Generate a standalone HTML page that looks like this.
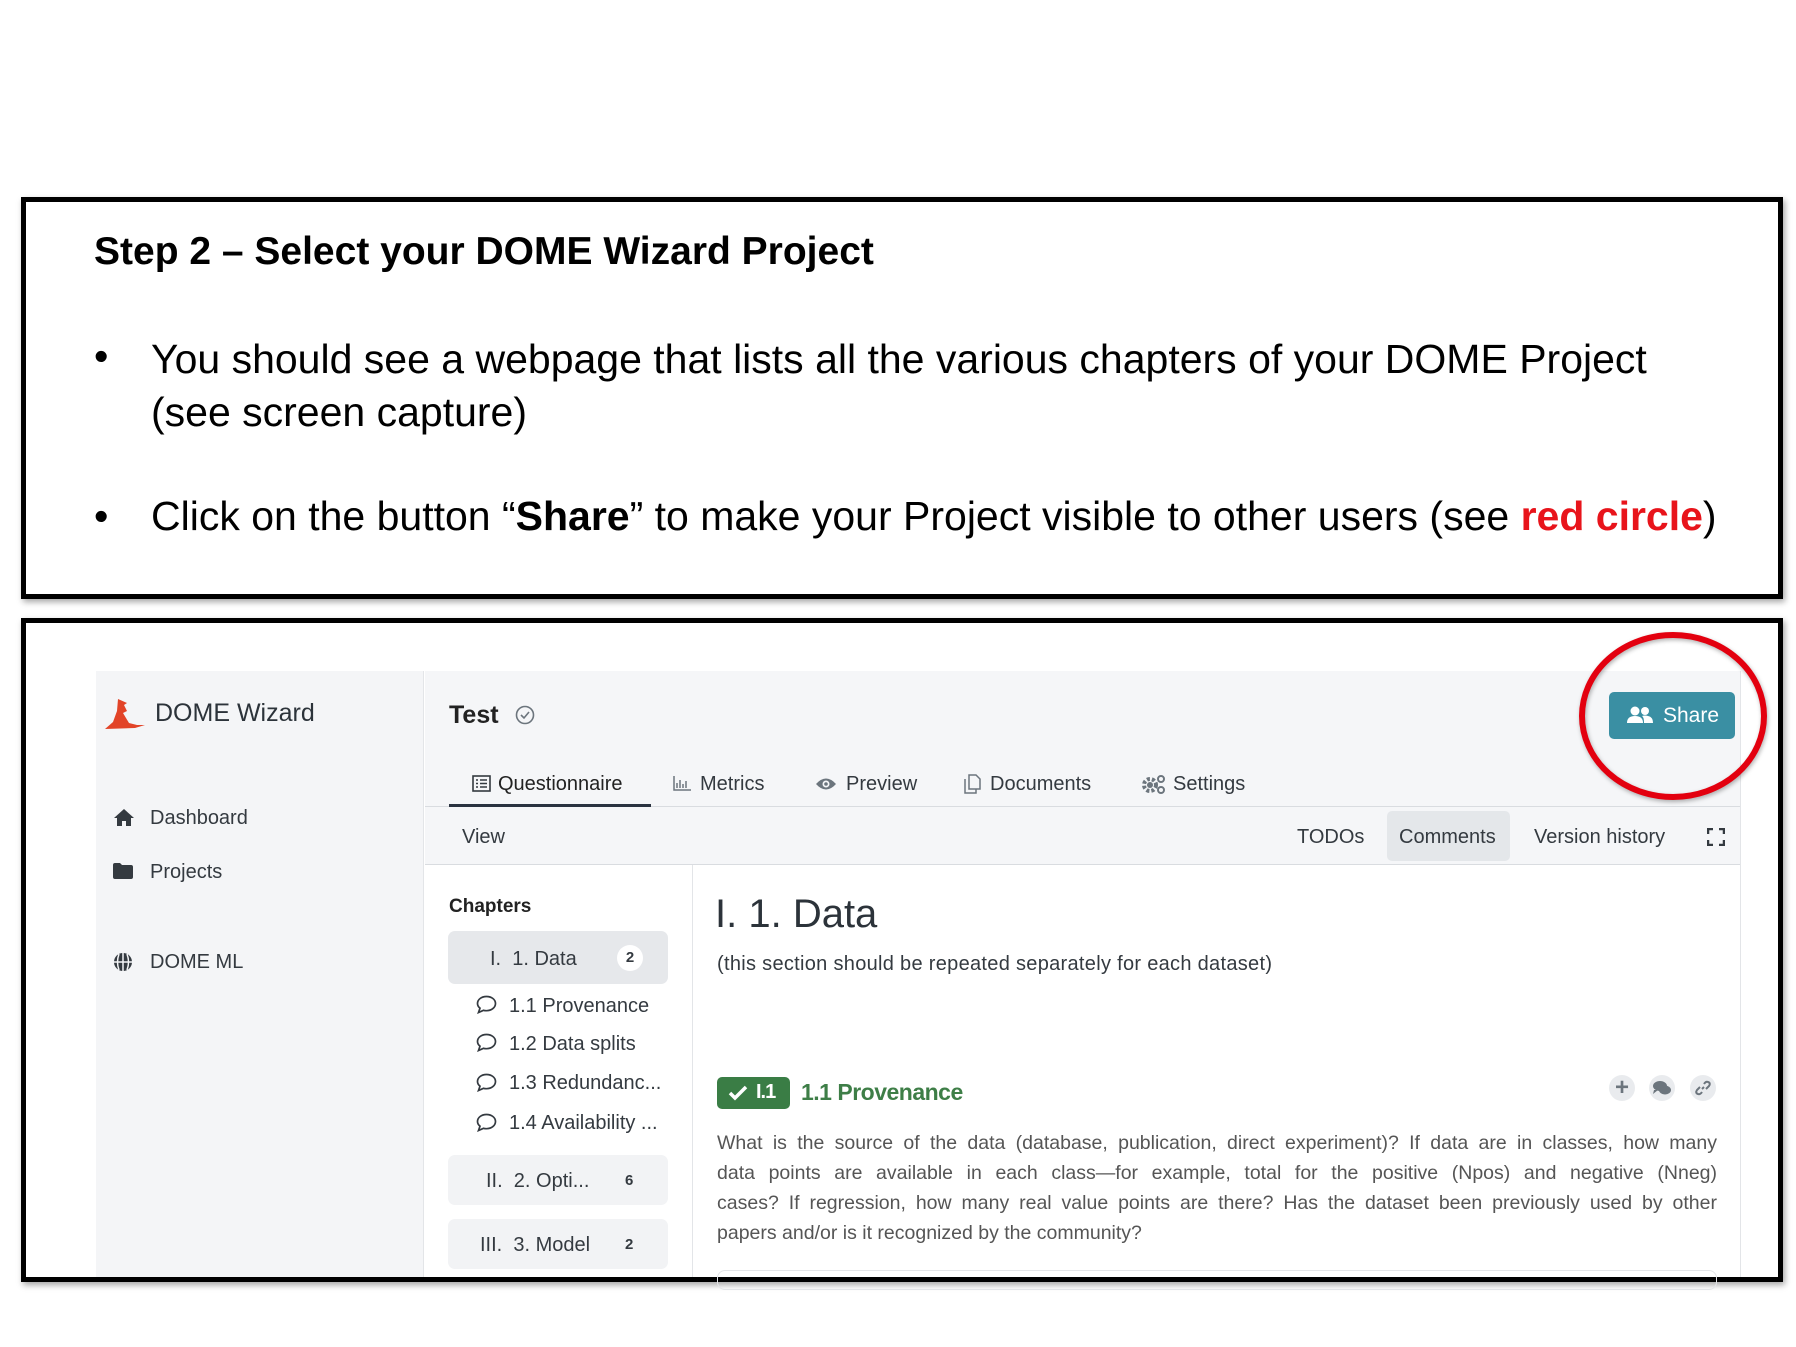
<!DOCTYPE html>
<html><head><meta charset="utf-8"><style>
*{margin:0;padding:0;box-sizing:border-box}
body{width:1796px;height:1347px;background:#fff;position:relative;overflow:hidden;font-family:"Liberation Sans",sans-serif;color:#343a40}
.abs{position:absolute;white-space:nowrap}
.box{position:absolute;border:5px solid #000;box-shadow:2px 3px 6px rgba(0,0,0,.35)}
.slide{font-family:"Liberation Sans",sans-serif;color:#000}
.ui{font-size:20px;color:#343a40}
.ico{position:absolute}
.pl{white-space:nowrap;text-align:justify;text-align-last:justify;height:30px}
</style></head><body>

<div class="box" style="left:21px;top:197px;width:1762px;height:402px"></div>
<div class="abs slide" style="left:94px;top:230px;font-size:39px;font-weight:bold">Step 2 – Select your DOME Wizard Project</div>
<div class="abs slide" style="left:94px;top:333px;font-size:41px">•</div>
<div class="abs slide" style="left:151px;top:333px;font-size:41px;line-height:53px">You should see a webpage that lists all the various chapters of your DOME Project<br>(see screen capture)</div>
<div class="abs slide" style="left:94px;top:493px;font-size:41px">•</div>
<div class="abs slide" style="left:151px;top:493px;font-size:41px">Click on the button “<b>Share</b>” to make your Project visible to other users (see <b style="color:#e8141b">red circle</b>)</div>

<div class="box" style="left:21px;top:618px;width:1762px;height:664px"></div>

<!-- app -->
<div style="position:absolute;left:96px;top:671px;width:1645px;height:606px;overflow:hidden">
 <div style="position:absolute;left:0;top:0;width:328px;height:606px;background:#f4f5f7;border-right:1px solid #e3e5e8"></div>
 <div style="position:absolute;left:329px;top:0;width:1316px;height:194px;background:#f5f6f8"></div>
 <div style="position:absolute;left:329px;top:135px;width:1316px;height:1px;background:#d9dce0"></div>
 <div style="position:absolute;left:329px;top:193px;width:1316px;height:1px;background:#d9dce0"></div>
 <div style="position:absolute;left:596px;top:194px;width:1px;height:420px;background:#e3e5e8"></div>
 <div style="position:absolute;left:1644px;top:0;width:1px;height:606px;background:#e3e5e8"></div>
</div>

<!-- logo -->
<svg class="ico" style="left:105px;top:697px" width="42" height="33" viewBox="0 0 42 33"><path d="M13 2 L22 6 L19 8 L22 14 L18 16 L24 26 L32 28 L40 28 L30 31 L0 32 L8 25 L12 14 Z" fill="#e24428"/></svg>
<div class="abs" style="left:155px;top:699px;font-size:25px;color:#2c333a">DOME Wizard</div>

<!-- nav -->
<svg class="ico" style="left:113px;top:808px" width="22" height="19" viewBox="0 0 22 19"><path d="M11 1 L1 10 L4 10 L4 18 L9 18 L9 13 L13 13 L13 18 L18 18 L18 10 L21 10 Z" fill="#343a40"/></svg>
<div class="abs ui" style="left:150px;top:807px">Dashboard</div>
<svg class="ico" style="left:113px;top:863px" width="20" height="16" viewBox="0 0 20 16"><path d="M0 2 Q0 0 2 0 L7 0 L9 2 L18 2 Q20 2 20 4 L20 14 Q20 16 18 16 L2 16 Q0 16 0 14Z" fill="#343a40"/></svg>
<div class="abs ui" style="left:150px;top:861px">Projects</div>
<svg class="ico" style="left:113px;top:952px" width="20" height="20" viewBox="0 0 20 20"><circle cx="10" cy="10" r="9" fill="#343a40"/><path d="M1 10 H19 M10 1 V19 M6 2 Q3 10 6 18 M14 2 Q17 10 14 18" stroke="#f4f5f7" stroke-width="1.5" fill="none"/></svg>
<div class="abs ui" style="left:150px;top:951px">DOME ML</div>

<!-- header -->
<div class="abs" style="left:449px;top:701px;font-size:25px;font-weight:bold;color:#222">Test</div>
<svg class="ico" style="left:515px;top:705px" width="20" height="20" viewBox="0 0 20 20"><circle cx="10" cy="10" r="8.5" fill="none" stroke="#6c757d" stroke-width="1.6"/><path d="M6 10 L9 13 L14 7" fill="none" stroke="#6c757d" stroke-width="1.6"/></svg>

<div style="position:absolute;left:1609px;top:692px;width:126px;height:47px;background:#3a8fa3;border-radius:5px"></div>
<svg class="ico" style="left:1627px;top:706px" width="26" height="18" viewBox="0 0 26 18"><circle cx="8" cy="5" r="4.5" fill="#fff"/><circle cx="18" cy="5" r="4" fill="#fff"/><path d="M0 17 Q0 10 8 10 Q16 10 16 17Z M17 17 Q17 11 15 10 Q18 9 21 10 Q26 11 26 17Z" fill="#fff"/></svg>
<div class="abs" style="left:1663px;top:704px;font-size:21px;color:#fff">Share</div>
<svg class="ico" style="left:1575px;top:628px;filter:drop-shadow(1px 2px 2px rgba(0,0,0,.3))" width="196" height="176" viewBox="0 0 196 176"><ellipse cx="98" cy="88" rx="91" ry="81" fill="none" stroke="#e3000f" stroke-width="6"/></svg>

<!-- tabs -->
<svg class="ico" style="left:472px;top:775px" width="19" height="17" viewBox="0 0 19 17"><rect x="1" y="1" width="17" height="15" fill="none" stroke="#343a40" stroke-width="1.6"/><path d="M4 5h2M8 5h7M4 8.5h2M8 8.5h7M4 12h2M8 12h7" stroke="#343a40" stroke-width="1.5"/></svg>
<div class="abs ui" style="left:498px;top:773px;color:#222">Questionnaire</div>
<div style="position:absolute;left:449px;top:804px;width:202px;height:3px;background:#2a3340"></div>
<svg class="ico" style="left:673px;top:776px" width="18" height="15" viewBox="0 0 18 15"><path d="M1 0V14H18M4 12V7M7 12V4M10 12V8M13 12V5" stroke="#6c757d" stroke-width="1.5" fill="none"/></svg>
<div class="abs ui" style="left:700px;top:773px">Metrics</div>
<svg class="ico" style="left:815px;top:777px" width="22" height="14" viewBox="0 0 22 14"><path d="M1 7 Q11 -4 21 7 Q11 18 1 7Z" fill="#6c757d"/><circle cx="11" cy="7" r="3.5" fill="#f5f6f8"/><circle cx="11" cy="7" r="1.8" fill="#6c757d"/></svg>
<div class="abs ui" style="left:846px;top:773px">Preview</div>
<svg class="ico" style="left:964px;top:774px" width="17" height="20" viewBox="0 0 17 20"><path d="M5 1H12L16 5V15H5Z M1 5V19H12V15" fill="none" stroke="#6c757d" stroke-width="1.5"/></svg>
<div class="abs ui" style="left:990px;top:773px">Documents</div>
<svg class="ico" style="left:1141px;top:774px" width="26" height="20" viewBox="0 0 26 20"><circle cx="9" cy="11" r="6" fill="none" stroke="#6c757d" stroke-width="4" stroke-dasharray="3 2"/><circle cx="9" cy="11" r="3" fill="#6c757d"/><circle cx="20" cy="5" r="3" fill="none" stroke="#6c757d" stroke-width="2"/><circle cx="20" cy="16" r="3" fill="none" stroke="#6c757d" stroke-width="2"/></svg>
<div class="abs ui" style="left:1173px;top:773px">Settings</div>

<!-- view bar -->
<div class="abs ui" style="left:462px;top:826px">View</div>
<div class="abs ui" style="left:1297px;top:826px">TODOs</div>
<div style="position:absolute;left:1387px;top:811px;width:123px;height:50px;background:#e4e7ea;border-radius:5px"></div>
<div class="abs ui" style="left:1399px;top:826px">Comments</div>
<div class="abs ui" style="left:1534px;top:826px">Version history</div>
<svg class="ico" style="left:1707px;top:828px" width="18" height="18" viewBox="0 0 18 18"><path d="M1 6V1H6M12 1H17V6M17 12V17H12M6 17H1V12" fill="none" stroke="#343a40" stroke-width="2.5"/></svg>

<!-- chapters -->
<div class="abs" style="left:449px;top:896px;font-size:19px;font-weight:bold;color:#222">Chapters</div>
<div style="position:absolute;left:448px;top:931px;width:220px;height:53px;background:#e6e8eb;border-radius:7px"></div>
<div class="abs ui" style="left:490px;top:948px">I.&nbsp; 1. Data</div>
<div style="position:absolute;left:617px;top:945px;width:26px;height:26px;border-radius:13px;background:#fff;font-size:15px;font-weight:bold;text-align:center;line-height:26px">2</div>
<div style="position:absolute;left:448px;top:1155px;width:220px;height:50px;background:#f2f3f5;border-radius:7px"></div>
<div class="abs ui" style="left:486px;top:1170px">II.&nbsp; 2. Opti...</div>
<div class="abs" style="left:625px;top:1172px;font-size:15px;font-weight:bold">6</div>
<div style="position:absolute;left:448px;top:1219px;width:220px;height:50px;background:#f2f3f5;border-radius:7px"></div>
<div class="abs ui" style="left:480px;top:1234px">III.&nbsp; 3. Model</div>
<div class="abs" style="left:625px;top:1236px;font-size:15px;font-weight:bold">2</div>

<svg class="ico" style="left:476px;top:995px" width="21" height="19" viewBox="0 0 21 19"><path d="M10.5 1.5C5.5 1.5 1.5 4.5 1.5 8.5c0 2 1 3.5 2.5 4.7L2.5 17.5 7.5 15.3c1 .3 2 .4 3 .4 5 0 9-3.2 9-7.2S15.5 1.5 10.5 1.5Z" fill="none" stroke="#343a40" stroke-width="1.7"/></svg>
<div class="abs ui" style="left:509px;top:995px">1.1 Provenance</div>
<svg class="ico" style="left:476px;top:1033px" width="21" height="19" viewBox="0 0 21 19"><path d="M10.5 1.5C5.5 1.5 1.5 4.5 1.5 8.5c0 2 1 3.5 2.5 4.7L2.5 17.5 7.5 15.3c1 .3 2 .4 3 .4 5 0 9-3.2 9-7.2S15.5 1.5 10.5 1.5Z" fill="none" stroke="#343a40" stroke-width="1.7"/></svg>
<div class="abs ui" style="left:509px;top:1033px">1.2 Data splits</div>
<svg class="ico" style="left:476px;top:1073px" width="21" height="19" viewBox="0 0 21 19"><path d="M10.5 1.5C5.5 1.5 1.5 4.5 1.5 8.5c0 2 1 3.5 2.5 4.7L2.5 17.5 7.5 15.3c1 .3 2 .4 3 .4 5 0 9-3.2 9-7.2S15.5 1.5 10.5 1.5Z" fill="none" stroke="#343a40" stroke-width="1.7"/></svg>
<div class="abs ui" style="left:509px;top:1072px">1.3 Redundanc...</div>
<svg class="ico" style="left:476px;top:1113px" width="21" height="19" viewBox="0 0 21 19"><path d="M10.5 1.5C5.5 1.5 1.5 4.5 1.5 8.5c0 2 1 3.5 2.5 4.7L2.5 17.5 7.5 15.3c1 .3 2 .4 3 .4 5 0 9-3.2 9-7.2S15.5 1.5 10.5 1.5Z" fill="none" stroke="#343a40" stroke-width="1.7"/></svg>
<div class="abs ui" style="left:509px;top:1112px">1.4 Availability ...</div>

<!-- content -->
<div class="abs" style="left:715px;top:892px;font-size:40px;color:#2c333a">I. 1. Data</div>
<div class="abs" style="left:717px;top:953px;font-size:20px;letter-spacing:0.3px">(this section should be repeated separately for each dataset)</div>
<div style="position:absolute;left:717px;top:1077px;width:73px;height:32px;background:#3a7d45;border-radius:5px"></div>
<svg class="ico" style="left:728px;top:1085px" width="20" height="16" viewBox="0 0 20 16"><path d="M2 8 L7 13 L18 2" fill="none" stroke="#fff" stroke-width="3.5"/></svg>
<div class="abs" style="left:756px;top:1081px;font-size:20px;font-weight:bold;color:#fff;letter-spacing:-1px">I.1</div>
<div class="abs" style="left:801px;top:1079px;font-size:23px;font-weight:bold;color:#3e7e47;letter-spacing:-0.5px">1.1 Provenance</div>
<div style="position:absolute;left:1609px;top:1075px;width:26px;height:26px;border-radius:13px;background:#e9ebee;color:#6c757d;font-size:24px;text-align:center;line-height:26px;font-weight:bold">+</div>
<div style="position:absolute;left:1649px;top:1075px;width:26px;height:26px;border-radius:13px;background:#e9ebee"></div>
<svg class="ico" style="left:1652px;top:1080px" width="20" height="16" viewBox="0 0 20 16"><ellipse cx="8" cy="6" rx="7" ry="5" fill="#6c757d"/><path d="M2 10 L1 14 L6 10Z" fill="#6c757d"/><ellipse cx="13" cy="10" rx="6" ry="4.5" fill="#6c757d"/></svg>
<div style="position:absolute;left:1690px;top:1075px;width:26px;height:26px;border-radius:13px;background:#e9ebee"></div>
<svg class="ico" style="left:1694px;top:1079px" width="18" height="18" viewBox="0 0 18 18"><path d="M8 10 L10 8 M6 8 L3 11 Q1 14 4 15 Q6 16 8 13 M12 10 L15 7 Q17 4 14 3 Q12 2 10 5" fill="none" stroke="#6c757d" stroke-width="2"/></svg>
<div style="position:absolute;left:717px;top:1128px;width:1000px;font-size:19.5px;line-height:30px;color:#555">
<div class="pl">What is the source of the data (database, publication, direct experiment)? If data are in classes, how many</div>
<div class="pl">data points are available in each class—for example, total for the positive (Npos) and negative (Nneg)</div>
<div class="pl">cases? If regression, how many real value points are there? Has the dataset been previously used by other</div>
<div style="white-space:nowrap;height:30px">papers and/or is it recognized by the community?</div>
</div>
<div style="position:absolute;left:717px;top:1270px;width:1000px;height:20px;border:1px solid #e3e5e8;border-radius:8px"></div>

</body></html>
